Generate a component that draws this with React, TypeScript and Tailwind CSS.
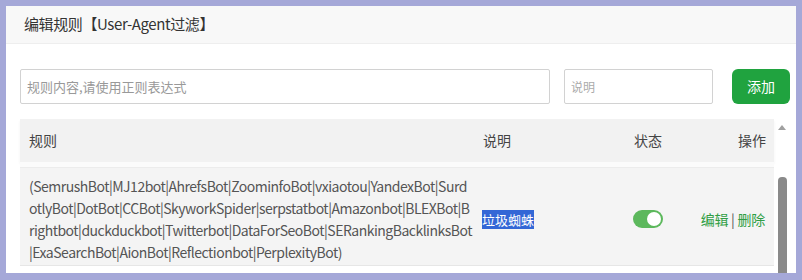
import React from "react";

const font = { fontFamily: '"Noto Sans CJK SC", "Open Sans", sans-serif' };

export default function App() {
  const lines = [
    "(SemrushBot|MJ12bot|AhrefsBot|ZoominfoBot|vxiaotou|YandexBot|Surd",
    "otlyBot|DotBot|CCBot|SkyworkSpider|serpstatbot|Amazonbot|BLEXBot|B",
    "rightbot|duckduckbot|Twitterbot|DataForSeoBot|SERankingBacklinksBot",
    "|ExaSearchBot|AionBot|Reflectionbot|PerplexityBot)",
  ];
  return (
    <div
      className="w-[802px] h-[280px] bg-[#a5a8d8] pt-[6px] pl-[6px] overflow-hidden"
      style={font}
    >
      <div className="w-[790px] h-[267px] bg-white flex flex-col overflow-hidden">
        <div className="h-[38px] shrink-0 bg-[#f8f8f8] border-b border-[#eeeeee] flex items-center pl-[18px] text-[15px] text-[#333] tracking-[-0.4px]">
          编辑规则【User-Agent过滤】
        </div>
        <div className="pl-[14px] pr-[6px] pt-[25px] flex flex-col">
          <div className="flex items-center h-[35px]">
            <div className="w-[530px] h-[35px] border border-[#d2d2d2] rounded-[2px] flex items-center pl-[6px] text-[13px] text-[#999]">
              规则内容,请使用正则表达式
            </div>
            <div className="ml-[14px] w-[149px] h-[35px] border border-[#d2d2d2] rounded-[2px] flex items-center pl-[6px] text-[12px] text-[#aaa]">
              说明
            </div>
            <div className="ml-[19px] w-[58px] h-[35px] rounded-[6px] bg-[#20a33f] text-white text-[14px] flex items-center justify-center">
              添加
            </div>
          </div>
          <div className="mt-[15px] flex">
            <div className="w-[754px] flex flex-col">
              <div className="h-[43px] bg-[#f2f2f2] flex items-center text-[14px] text-[#444] shadow-[0_2px_3px_rgba(0,0,0,0.05)]">
                <div className="w-[454px] pl-[9px]">规则</div>
                <div className="w-[153px] pl-[9px]">说明</div>
                <div className="w-[42px] text-center">状态</div>
                <div className="flex-1 text-right pr-[8px]">操作</div>
              </div>
              <div className="h-[6px] bg-[#fbfbfb] border-b border-[#ececec]" />
              <div className="bg-[#f4f4f4] flex items-center pt-[7px] pb-[2px] text-[14px] text-[#555] border-b border-[#e6e6e6]">
                <div className="w-[454px] pl-[9px] leading-[22px] overflow-hidden">
                  {lines.map((l, i) => (
                    <div key={i} className="whitespace-nowrap tracking-[-0.5px]">
                      {l}
                    </div>
                  ))}
                </div>
                <div className="w-[153px] pl-[8px] overflow-hidden">
                  <span className="bg-[#3367d6] text-white text-[13px] leading-[19px] inline-block">垃圾蜘蛛</span>
                </div>
                <div className="w-[42px] flex justify-center">
                  <div className="w-[30px] h-[18px] rounded-full bg-[#5cb85c] flex items-center justify-end pr-[2px]">
                    <div className="w-[14px] h-[14px] rounded-full bg-white" />
                  </div>
                </div>
                <div className="flex-1 text-right pr-[9px] text-[14px] tracking-[-0.3px]">
                  <span className="text-[#2f9e44]">编辑</span>
                  <span className="text-[#555] px-[3px]">|</span>
                  <span className="text-[#2f9e44]">删除</span>
                </div>
              </div>
              <div className="h-[20px]" />
            </div>
            <div className="w-[16px] flex flex-col items-center">
              <div className="mt-[6px] w-0 h-0 border-l-[4px] border-r-[4px] border-b-[5px] border-l-transparent border-r-transparent border-b-[#a0a0a0]" />
              <div className="mt-[47px] w-[9px] h-[120px] rounded-[4px] bg-[#8a8a8a]" />
            </div>
          </div>
        </div>
      </div>
    </div>
  );
}
